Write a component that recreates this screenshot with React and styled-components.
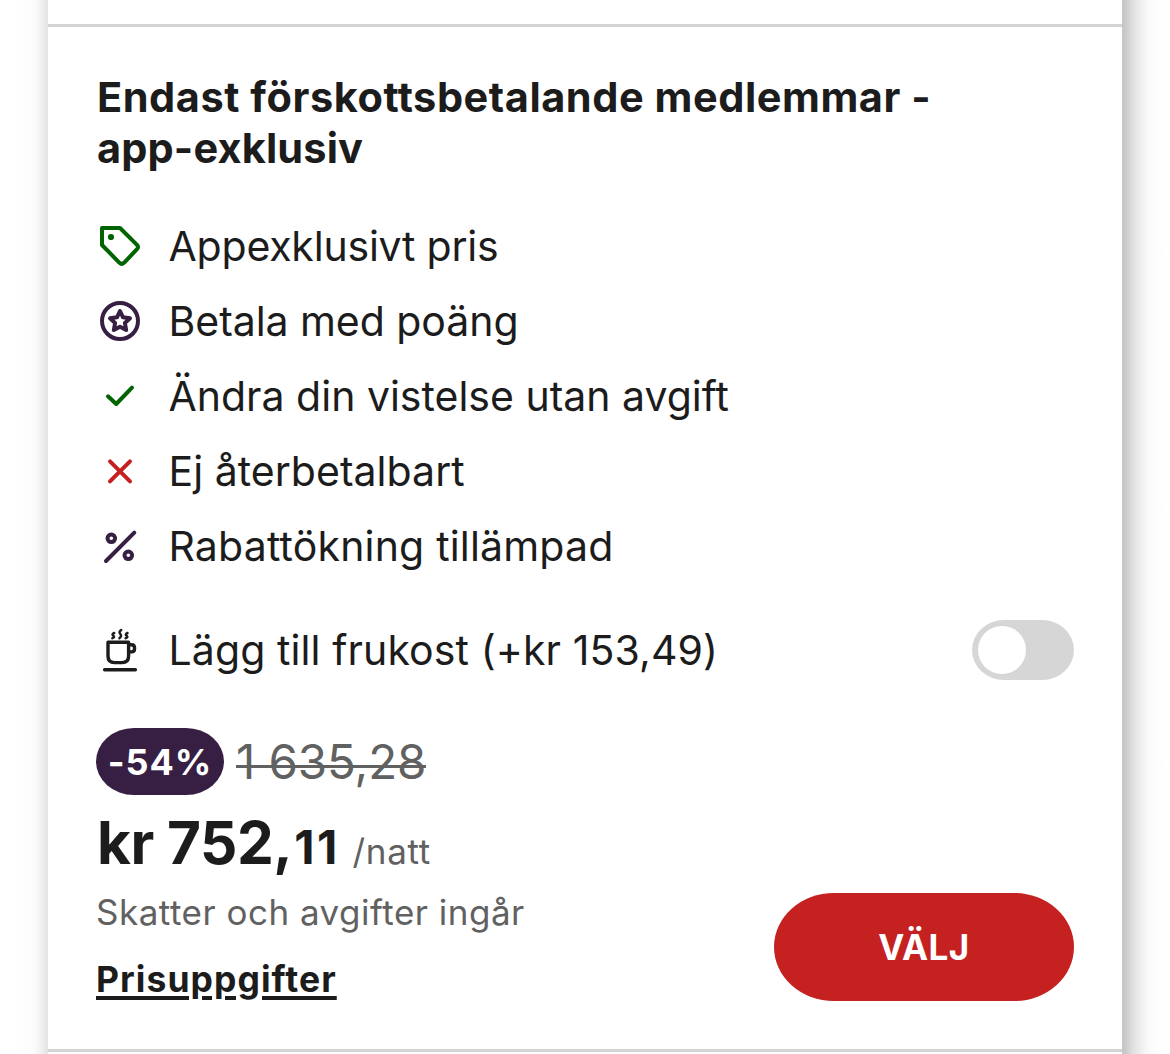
import React from 'react';
import styled, { createGlobalStyle } from 'styled-components';

const Global = createGlobalStyle`
  *{box-sizing:border-box}
  body{margin:0;background:#fff;font-family:Inter,"Liberation Sans",sans-serif;color:#1c1c1c;overflow:hidden;font-variant-ligatures:none}
`;
const Page = styled.main`
  height:1054px;display:grid;grid-template-columns:48px 1074px 48px;overflow:hidden;
`;
const Edge = styled.div`
  background:${p => p.$right
    ? 'linear-gradient(to right,#c6c6c6 0,#cbcbcb 4px,#dedede 10px,#ececec 17px,#f8f8f8 25px,#fdfdfd 34px,#fff 48px)'
    : 'linear-gradient(to left,#e2e2e2 0,#efefef 6px,#f8f8f8 11px,#fdfdfd 17px,#fff 34px)'};
`;
const Column = styled.div`
  display:grid;grid-template-rows:24px 1028px 2px;background:#fff;
`;
const Card = styled.section`
  border-top:3px solid #d4d4d4;border-bottom:3px solid #d4d4d4;padding:45px 48px 0;
`;
const Line = styled.span`
  display:block;white-space:nowrap;letter-spacing:${p => p.$ls || 0}px;
`;
const Title = styled.h2`
  margin:0;font-size:41.5px;line-height:51px;font-weight:700;padding-left:1px;
`;
const Features = styled.ul`
  list-style:none;margin:34px 0 0;padding:0;
`;
const Row = styled.li`
  display:flex;align-items:center;height:75px;font-size:41px;
`;
const Glyph = styled.svg`
  width:48px;height:48px;flex:none;margin-right:24.5px;
  fill:none;stroke-linecap:round;stroke-linejoin:round;
`;
const Breakfast = styled(Row).attrs({ as: 'div' })`
  margin-top:29px;
`;
const Toggle = styled.button`
  margin-left:auto;width:102px;height:60px;border:0;border-radius:32px / 30px;background:#d6d6d6;padding:6px;display:flex;
`;
const Knob = styled.span`
  width:48px;height:48px;border-radius:50%;background:#fff;
`;
const Discount = styled.div`
  display:flex;align-items:center;gap:12px;height:67px;margin-top:41px;
`;
const Badge = styled.span`
  width:128px;height:67px;border-radius:38px / 33.5px;background:#361f43;color:#fff;font-size:36px;font-weight:700;line-height:68px;display:flex;align-items:flex-start;justify-content:center;
`;
const Old = styled.s`
  font-size:47.5px;color:#616161;text-decoration:none;letter-spacing:-.1px;
  background:linear-gradient(#616161,#616161) 0 32px / 100% 3px no-repeat;
`;
const Bottom = styled.div`
  display:flex;justify-content:space-between;
`;
const Price = styled.div`
  display:flex;align-items:baseline;height:74px;line-height:95px;padding-left:1px;
`;
const Amount = styled.strong`
  font-size:58.5px;font-weight:700;letter-spacing:-.5px;
`;
const Cents = styled.strong`
  font-size:47px;font-weight:700;letter-spacing:2.3px;margin-left:2px;
`;
const Note = styled.span`
  font-size:35px;color:#616161;margin-left:13px;letter-spacing:.7px;
`;
const Tax = styled.div`
  margin-top:21px;line-height:44px;font-size:35px;color:#616161;
`;
const Details = styled.a`
  display:block;width:max-content;margin-top:24px;line-height:44px;font-size:35.5px;font-weight:700;text-decoration:underline;text-decoration-thickness:4px;text-underline-offset:4px;
`;
const Select = styled.button`
  width:300px;height:108px;border:0;border-radius:60px / 54px;background:#c52121;color:#fff;font:700 35px Inter,sans-serif;letter-spacing:.4px;margin-top:98px;display:flex;align-items:center;justify-content:center;
`;

const Icon = ({ color, width = 4, children }) => (
  <Glyph viewBox="0 0 48 48" stroke={color} strokeWidth={width}>{children}</Glyph>
);
const features = [
  ['Appexklusivt pris', -0.2, <Icon color="#006400"><path d="M6 6h18L41 22.800q2 2.200 0 4.400L28 40.800q-2.300 2-4.500 0L6 23Z"/><circle cx="15" cy="15" r="3.100" fill="#006400" stroke="none"/></Icon>],
  ['Betala med poäng', -0.05, <Icon color="#361f43"><circle cx="24" cy="24" r="18"/><path strokeWidth="4" d="M24 14 27 20.300 34 21.300 28.900 26 30.200 33 24 29.700 17.800 33 19.100 26 14 21.300 21 20.300Z"/></Icon>],
  ['Ändra din vistelse utan avgift', 0, <Icon color="#006400"><path d="m12 24.300 8.200 7.700 15.800-16.300"/></Icon>],
  ['Ej återbetalbart', 0.03, <Icon color="#c52121"><path d="m14 14.300 20 20m0-20-20 20"/></Icon>],
  ['Rabattökning tillämpad', 0.18, <Icon color="#361f43"><path d="m10 39 28.300-28.300"/><circle cx="15.300" cy="16.300" r="3.800"/><circle cx="32.300" cy="33.300" r="3.800"/></Icon>],
];

export default function App() {
  return (
    <>
      <Global />
      <Page>
        <Edge />
        <Column>
          <div />
          <Card>
            <Title>
              <Line $ls={0.54}>Endast förskottsbetalande medlemmar -</Line>
              <Line $ls={0.15}>app-exklusiv</Line>
            </Title>
            <Features>
              {features.map(([text, ls, icon]) => <Row key={text}>{icon}<Line $ls={ls}>{text}</Line></Row>)}
            </Features>
            <Breakfast>
              <Icon color="#1c1c1c" width={3.4}>
                <path d="M8.600 43.700h30.800M12 16.300h20.600v13.700q0 6.600-6.500 6.600h-7.600q-6.500 0-6.500-6.600ZM32.600 18.700h3q3 0 3 3.600t-3 3.600h-3"/>
                <path strokeWidth="2.500" d="M18.200 7q-2.800 1.300-.9 2.700t-.9 2.500M25.200 4q-2.800 2-.9 4t-.9 4.200M31.500 7q-2.800 1.300-.9 2.700t-.9 2.500"/>
              </Icon>
              <Line $ls={0.1}>Lägg till frukost (+kr 153,49)</Line>
              <Toggle aria-label="Lägg till frukost"><Knob /></Toggle>
            </Breakfast>
            <Discount><Badge><Line $ls={0.9}>-54%</Line></Badge><Old>1 635,28</Old></Discount>
            <Bottom>
              <div>
                <Price><Amount>kr 752,</Amount><Cents>11</Cents><Note>/natt</Note></Price>
                <Tax><Line $ls={0.5}>Skatter och avgifter ingår</Line></Tax>
                <Details><Line $ls={1.05}>Prisuppgifter</Line></Details>
              </div>
              <Select>VÄLJ</Select>
            </Bottom>
          </Card>
        </Column>
        <Edge $right />
      </Page>
    </>
  );
}
